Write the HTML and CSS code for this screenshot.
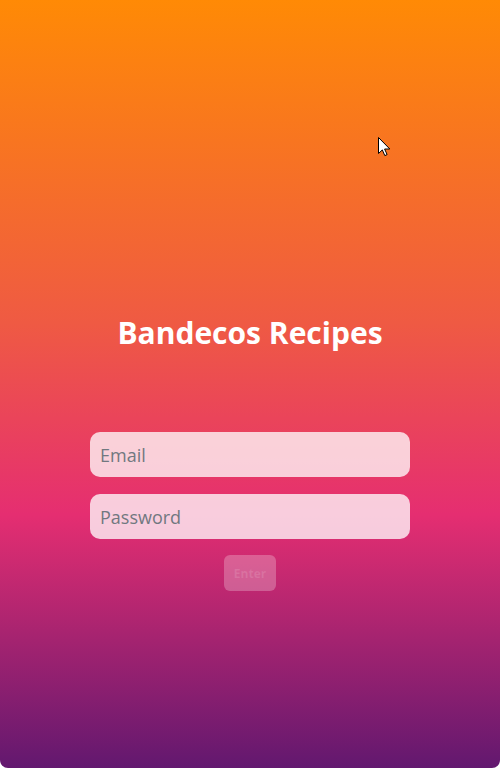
FILE: index.html
```html
<!DOCTYPE html>
<html>
<head>
<meta charset="utf-8">
<link rel="stylesheet" href="styles.css">
</head>
<body>
<main class="page">
  <h1 class="title">Bandecos Recipes</h1>
  <form class="login">
    <input class="field" type="email" placeholder="Email">
    <input class="field" type="password" placeholder="Password">
    <button class="enter" type="button" disabled>Enter</button>
  </form>
  <svg class="pointer" width="13" height="20" viewBox="0 0 13 20">
    <path d="M0.5 0.5 L0.5 16.5 L4.3 12.9 L6.8 18.6 L9.1 17.6 L6.6 12 L11.8 12 Z" fill="#fff" stroke="#000" stroke-width="1" stroke-linejoin="miter"/>
  </svg>
</main>
</body>
</html>
```
FILE: styles.css
```css
html, body {
  margin: 0;
  padding: 0;
  height: 100%;
}
body {
  font-family: "Open Sans", "Noto Sans", sans-serif;
}
.page {
  position: relative;
  height: 768px;
  box-sizing: border-box;
  background: linear-gradient(180deg, #ff8a05 0%, #ef5a43 42%, #e52e71 67%, #62186f 100%);
  display: flex;
  flex-direction: column;
  align-items: center;
  padding-top: 309px;
  border-radius: 0 0 8px 8px;
}
.title {
  margin: 0;
  color: #fff;
  font-size: 30px;
  font-weight: 700;
  line-height: 48px;
}
.login {
  margin-top: 75px;
  display: flex;
  flex-direction: column;
  align-items: center;
  gap: 17px;
}
.field {
  width: 320px;
  height: 45px;
  box-sizing: border-box;
  border: none;
  border-radius: 10px;
  background: rgba(255, 255, 255, 0.76);
  padding: 0 10px;
  font-family: inherit;
  font-size: 18px;
  color: #333;
  outline: none;
}
.field::placeholder {
  color: #717880;
}
.enter {
  margin-top: -1px;
  width: 52px;
  height: 36px;
  border: none;
  border-radius: 6px;
  background: rgba(255, 255, 255, 0.25);
  color: rgba(255, 255, 255, 0.12);
  font-family: inherit;
  font-size: 12px;
  font-weight: 700;
}
.pointer {
  position: absolute;
  left: 378px;
  top: 137px;
}
```
